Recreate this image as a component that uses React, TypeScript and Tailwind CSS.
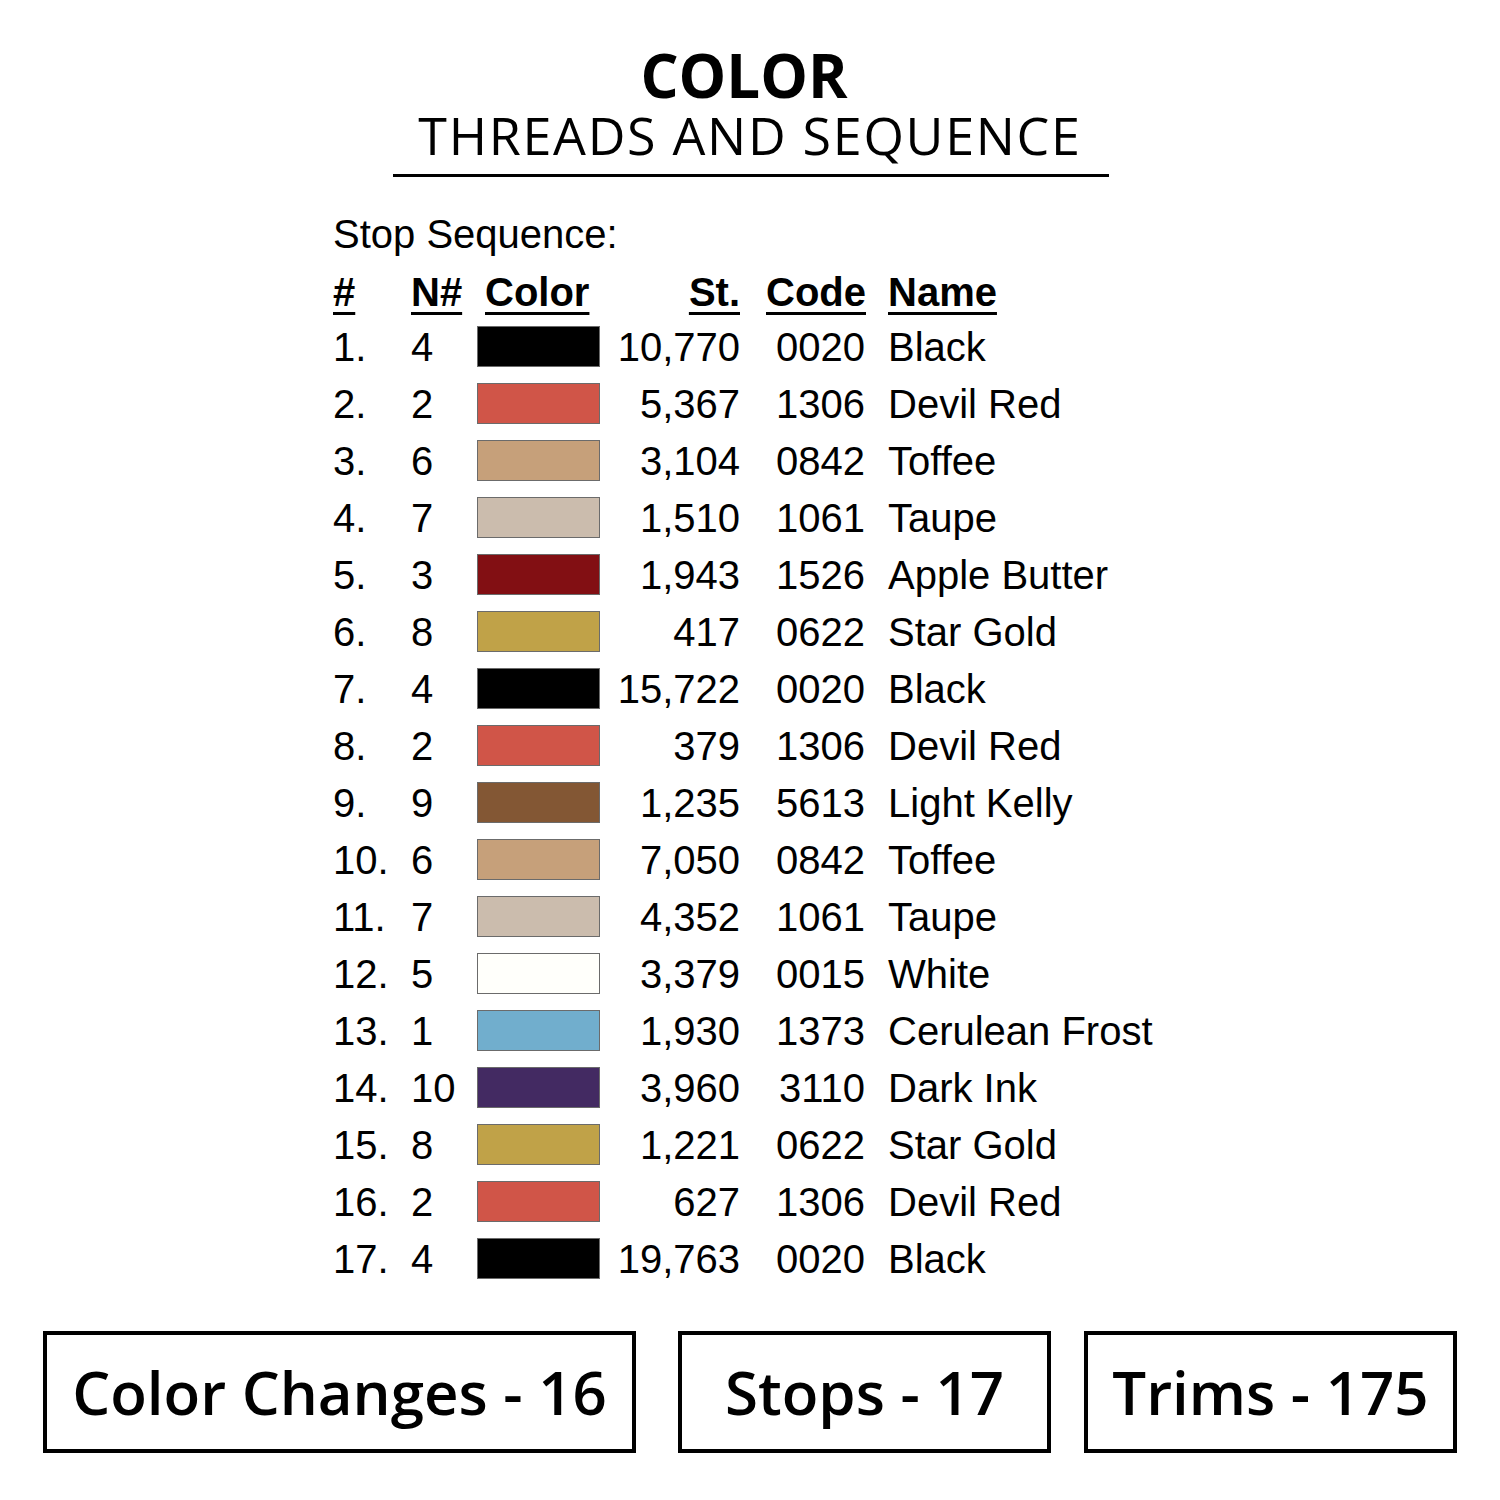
const rows = [
  { n: "1.", needle: "4", color: "#000000", st: "10,770", code: "0020", name: "Black" },
  { n: "2.", needle: "2", color: "#d05548", st: "5,367", code: "1306", name: "Devil Red" },
  { n: "3.", needle: "6", color: "#c6a07a", st: "3,104", code: "0842", name: "Toffee" },
  { n: "4.", needle: "7", color: "#cbbcad", st: "1,510", code: "1061", name: "Taupe" },
  { n: "5.", needle: "3", color: "#820f13", st: "1,943", code: "1526", name: "Apple Butter" },
  { n: "6.", needle: "8", color: "#c0a248", st: "417", code: "0622", name: "Star Gold" },
  { n: "7.", needle: "4", color: "#000000", st: "15,722", code: "0020", name: "Black" },
  { n: "8.", needle: "2", color: "#d05548", st: "379", code: "1306", name: "Devil Red" },
  { n: "9.", needle: "9", color: "#835734", st: "1,235", code: "5613", name: "Light Kelly" },
  { n: "10.", needle: "6", color: "#c6a07a", st: "7,050", code: "0842", name: "Toffee" },
  { n: "11.", needle: "7", color: "#cbbcad", st: "4,352", code: "1061", name: "Taupe" },
  { n: "12.", needle: "5", color: "#fffffb", st: "3,379", code: "0015", name: "White" },
  { n: "13.", needle: "1", color: "#71aecd", st: "1,930", code: "1373", name: "Cerulean Frost" },
  { n: "14.", needle: "10", color: "#432a62", st: "3,960", code: "3110", name: "Dark Ink" },
  { n: "15.", needle: "8", color: "#c0a248", st: "1,221", code: "0622", name: "Star Gold" },
  { n: "16.", needle: "2", color: "#d05548", st: "627", code: "1306", name: "Devil Red" },
  { n: "17.", needle: "4", color: "#000000", st: "19,763", code: "0020", name: "Black" },
]

const cols = "grid grid-cols-[78px_66px_123px_140px_148px_1fr] items-center"
const head = "underline decoration-[3px] underline-offset-[6px]"

export default function App() {
  return (
    <div className="w-[1500px] h-[1500px] bg-white text-black flex flex-col items-center">
      {/* Title */}
      <div className="mt-[45px] mr-[12px] h-[60px] text-[60px] leading-[60px] font-bold font-['Open_Sans',sans-serif]">
        COLOR
      </div>
      <div className="mt-[4px] h-[52px] text-[52px] leading-[52px] tracking-[1.7px] font-['Open_Sans',sans-serif]">
        THREADS AND SEQUENCE
      </div>
      <div className="mt-[13px] w-[716px] h-[3px] bg-black ml-[1px]" />

      {/* Stop sequence table */}
      <div className="mt-[29px] w-[1500px] pl-[333px] font-['Liberation_Sans',Arial,sans-serif] text-[40px]">
        <div className="h-[59px] leading-[57px]">Stop Sequence:</div>
        <div className={`${cols} h-[54px] leading-[54px] font-bold`}>
          <span className={head}>#</span>
          <span className={head}>N#</span>
          <span className="pl-[8px]">
            <span className={head}>Color</span>
          </span>
          <span className="text-right">
            <span className={head}>St.</span>
          </span>
          <span className="pl-[26px]">
            <span className={head}>Code</span>
          </span>
          <span>
            <span className={head}>Name</span>
          </span>
        </div>
        {rows.map((r) => (
          <div key={r.n} className={`${cols} h-[57px] leading-[57px]`}>
            <span>{r.n}</span>
            <span>{r.needle}</span>
            <div className="h-[41px] -mt-[3px] border border-[#6b6b6b]" style={{ backgroundColor: r.color }} />
            <span className="text-right">{r.st}</span>
            <span className="text-right pr-[23px]">{r.code}</span>
            <span>{r.name}</span>
          </div>
        ))}
      </div>

      {/* Summary boxes */}
      <div className="mt-[43px] w-[1500px] flex pl-[43px] font-['Open_Sans',sans-serif] font-semibold text-[60px]">
        <div className="w-[593px] h-[122px] border-[4px] border-black flex items-center justify-center">
          Color Changes - 16
        </div>
        <div className="ml-[42px] w-[373px] h-[122px] border-[4px] border-black flex items-center justify-center">
          Stops - 17
        </div>
        <div className="ml-[33px] w-[373px] h-[122px] border-[4px] border-black flex items-center justify-center">
          Trims - 175
        </div>
      </div>
    </div>
  )
}
